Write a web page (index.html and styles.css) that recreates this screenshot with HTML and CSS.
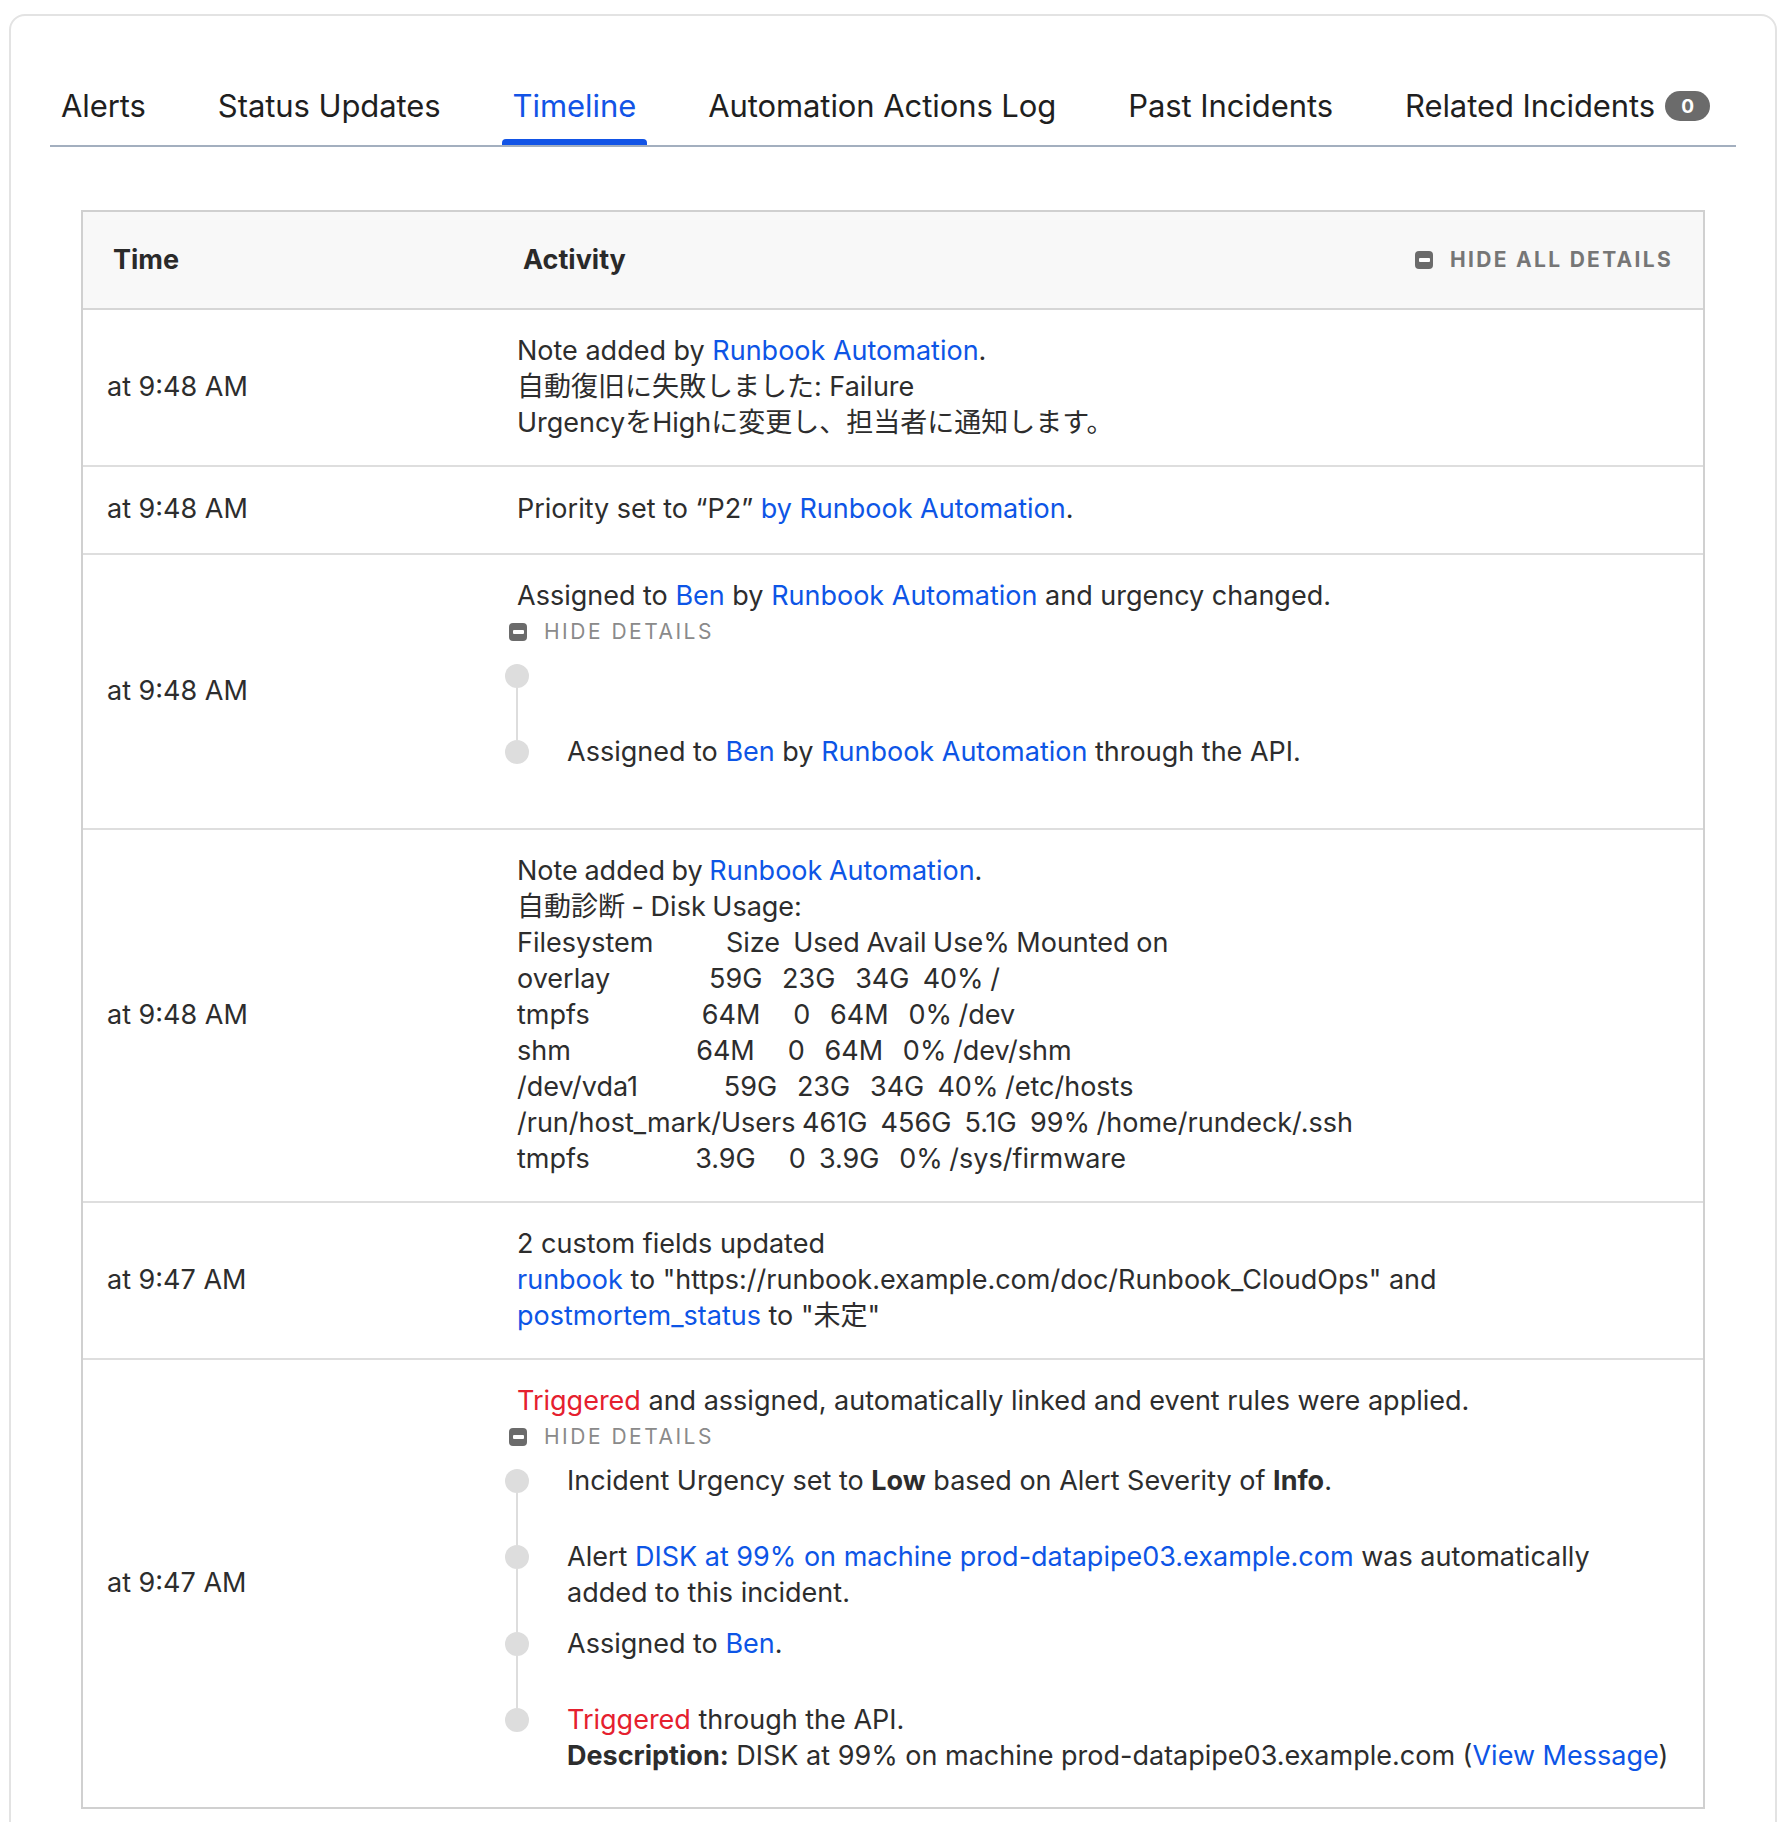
FILE: index.html
```html
<!DOCTYPE html>
<html lang="en">
<head>
<meta charset="utf-8">
<title>Incident Timeline</title>
<link rel="stylesheet" href="styles.css">
</head>
<body>
<div class="card">
  <nav class="tabs">
    <a class="tab" href="#">Alerts</a>
    <a class="tab" href="#">Status Updates</a>
    <a class="tab active" href="#">Timeline</a>
    <a class="tab" href="#">Automation Actions Log</a>
    <a class="tab" href="#">Past Incidents</a>
    <a class="tab" href="#">Related Incidents <span class="badge">0</span></a>
  </nav>

  <table class="tl-table">
    <colgroup><col class="col-time"><col></colgroup>
    <thead>
      <tr>
        <th>Time</th>
        <th>
          <div class="th-activity">
            <span>Activity</span>
            <button class="toggle-all"><span class="minus-icon"></span>HIDE ALL DETAILS</button>
          </div>
        </th>
      </tr>
    </thead>
    <tbody>
      <tr>
        <td class="time">at 9:48 AM</td>
        <td class="activity">Note added by <a class="link" href="#">Runbook Automation</a>.<br>自動復旧に失敗しました: Failure<br>UrgencyをHighに変更し、担当者に通知します。</td>
      </tr>
      <tr class="single">
        <td class="time">at 9:48 AM</td>
        <td class="activity">Priority set to “P2” <a class="link" href="#">by Runbook Automation</a>.</td>
      </tr>
      <tr>
        <td class="time">at 9:48 AM</td>
        <td class="activity">
          <div>Assigned to <a class="link" href="#">Ben</a> by <a class="link" href="#">Runbook Automation</a> and urgency changed.</div>
          <button class="toggle"><span class="minus-icon"></span>HIDE DETAILS</button>
          <ul class="tl">
            <li class="tl-item"><span class="rail"><span class="seg-top"></span><span class="dot"></span><span class="seg"></span></span><div class="tl-text"></div></li>
            <li class="tl-item"><span class="rail"><span class="seg-top"></span><span class="dot"></span><span class="seg"></span></span><div class="tl-text">Assigned to <a class="link" href="#">Ben</a> by <a class="link" href="#">Runbook Automation</a> through the API.</div></li>
          </ul>
        </td>
      </tr>
      <tr>
        <td class="time">at 9:48 AM</td>
        <td class="activity"><div class="note">Note added by <a class="link" href="#">Runbook Automation</a>.
自動診断 - Disk Usage:
Filesystem           Size  Used Avail Use% Mounted on
overlay               59G   23G   34G  40% /
tmpfs                 64M     0   64M   0% /dev
shm                   64M     0   64M   0% /dev/shm
/dev/vda1             59G   23G   34G  40% /etc/hosts
/run/host_mark/Users 461G  456G  5.1G  99% /home/rundeck/.ssh
tmpfs                3.9G     0  3.9G   0% /sys/firmware</div></td>
      </tr>
      <tr>
        <td class="time">at 9:47 AM</td>
        <td class="activity">2 custom fields updated<br><a class="link" href="#">runbook</a> to "https://runbook.example.com/doc/Runbook_CloudOps" and<br><a class="link" href="#">postmortem_status</a> to "未定"</td>
      </tr>
      <tr>
        <td class="time">at 9:47 AM</td>
        <td class="activity">
          <div><span class="red">Triggered</span> and assigned, automatically linked and event rules were applied.</div>
          <button class="toggle"><span class="minus-icon"></span>HIDE DETAILS</button>
          <ul class="tl">
            <li class="tl-item"><span class="rail"><span class="seg-top"></span><span class="dot"></span><span class="seg"></span></span><div class="tl-text">Incident Urgency set to <b>Low</b> based on Alert Severity of <b>Info</b>.</div></li>
            <li class="tl-item"><span class="rail"><span class="seg-top"></span><span class="dot"></span><span class="seg"></span></span><div class="tl-text">Alert <a class="link" href="#">DISK at 99% on machine prod-datapipe03.example.com</a> was automatically<br>added to this incident.</div></li>
            <li class="tl-item"><span class="rail"><span class="seg-top"></span><span class="dot"></span><span class="seg"></span></span><div class="tl-text">Assigned to <a class="link" href="#">Ben</a>.</div></li>
            <li class="tl-item"><span class="rail"><span class="seg-top"></span><span class="dot"></span><span class="seg"></span></span><div class="tl-text"><span class="red">Triggered</span> through the API.<br><span class="nowrap"><b>Description:</b> DISK at 99% on machine prod-datapipe03.example.com (<a class="link" href="#">View Message</a>)</span></div></li>
          </ul>
        </td>
      </tr>
    </tbody>
  </table>
</div>
</body>
</html>
```

FILE: styles.css
```css
* { box-sizing: border-box; }

html, body {
  margin: 0;
  padding: 0;
  background: #ffffff;
}

body {
  font-family: "Inter", "Noto Sans CJK JP", sans-serif;
  font-size: 27px;
  line-height: 36px;
  color: #2d2d2d;
}

.card {
  margin: 14px 9px 0;
  border: 2px solid #e3e3e3;
  border-radius: 16px 16px 0 0;
  padding: 71px 39px 80px;
}

/* Tabs */
.tabs {
  display: flex;
  gap: 50px;
  border-bottom: 2px solid #a3afbf;
}

.tab {
  position: relative;
  display: flex;
  align-items: center;
  gap: 10px;
  padding: 0 11px 20px;
  font-size: 31px;
  line-height: 38px;
  letter-spacing: -0.08px;
  color: #1f1f1f;
  text-decoration: none;
  white-space: nowrap;
}

.tab.active { color: #1254e6; }

.tab.active::after {
  content: "";
  position: absolute;
  left: 0;
  right: 0;
  bottom: 0;
  height: 6px;
  background: #1254e6;
  border-radius: 4px 4px 0 0;
}

.badge {
  display: inline-flex;
  align-items: center;
  justify-content: center;
  width: 45px;
  height: 30px;
  border-radius: 15px;
  background: #6b6b6b;
  color: #ffffff;
  font-size: 19px;
  font-weight: 700;
  line-height: 1;
  letter-spacing: 0;
}

/* Table */
.tl-table {
  width: calc(100% - 62px);
  margin: 63px 31px 0;
  border: 2px solid #d0d0d0;
  border-collapse: separate;
  border-spacing: 0;
}

.col-time { width: 410px; }

.tl-table th {
  background: #f8f8f8;
  border-bottom: 2px solid #d6d6d6;
  padding: 30px 30px 30px;
  text-align: left;
  font-weight: 700;
  color: #2a2a2a;
  vertical-align: middle;
}

.th-activity {
  display: flex;
  align-items: center;
  justify-content: space-between;
}

.tl-table td {
  padding: 23px 24px 24px;
  vertical-align: top;
}

.tl-table tr.single td { padding: 24px 24px 26px; }

.tl-table tbody tr + tr td { border-top: 2px solid #dedede; }

.tl-table td.time { vertical-align: middle; }

.link {
  color: #0d55e6;
  text-decoration: none;
}

.red { color: #e5202e; }

b { font-weight: 700; }

.nowrap { white-space: nowrap; }

.note {
  white-space: pre-wrap;
  word-spacing: -1px;
}

/* Toggles */
.minus-icon {
  display: inline-flex;
  align-items: center;
  justify-content: center;
  width: 18px;
  height: 18px;
  border-radius: 4px;
  background: #6b6b6b;
  flex-shrink: 0;
}

.minus-icon::after {
  content: "";
  width: 11px;
  height: 4px;
  background: #ffffff;
  border-radius: 1px;
}

.toggle-all,
.toggle {
  display: flex;
  align-items: center;
  gap: 17px;
  padding: 0;
  border: none;
  background: none;
  font-family: inherit;
  cursor: pointer;
}

.toggle-all {
  font-size: 21px;
  font-weight: 700;
  letter-spacing: 2.3px;
  color: #767676;
  line-height: 36px;
}

.toggle {
  margin-left: -8px;
  font-size: 21px;
  font-weight: 400;
  letter-spacing: 2.5px;
  color: #8a8a8a;
  line-height: 36px;
  height: 36px;
}

/* Detail timeline */
.tl {
  list-style: none;
  margin: 8px 0 -6px -12px;
  padding: 0;
}

.tl-item {
  display: flex;
  min-height: 76px;
}

.rail {
  display: flex;
  flex-direction: column;
  align-items: center;
  width: 24px;
  margin-right: 38px;
  flex-shrink: 0;
}

.seg-top {
  width: 2px;
  height: 6px;
  background: #dddddd;
}

.dot {
  width: 24px;
  height: 24px;
  border-radius: 50%;
  background: #dddddd;
}

.seg {
  flex: 1;
  width: 2px;
  background: #dddddd;
}

.tl-item:first-child .seg-top,
.tl-item:last-child .seg { background: transparent; }

.tl-text { padding-bottom: 15px; }
```
